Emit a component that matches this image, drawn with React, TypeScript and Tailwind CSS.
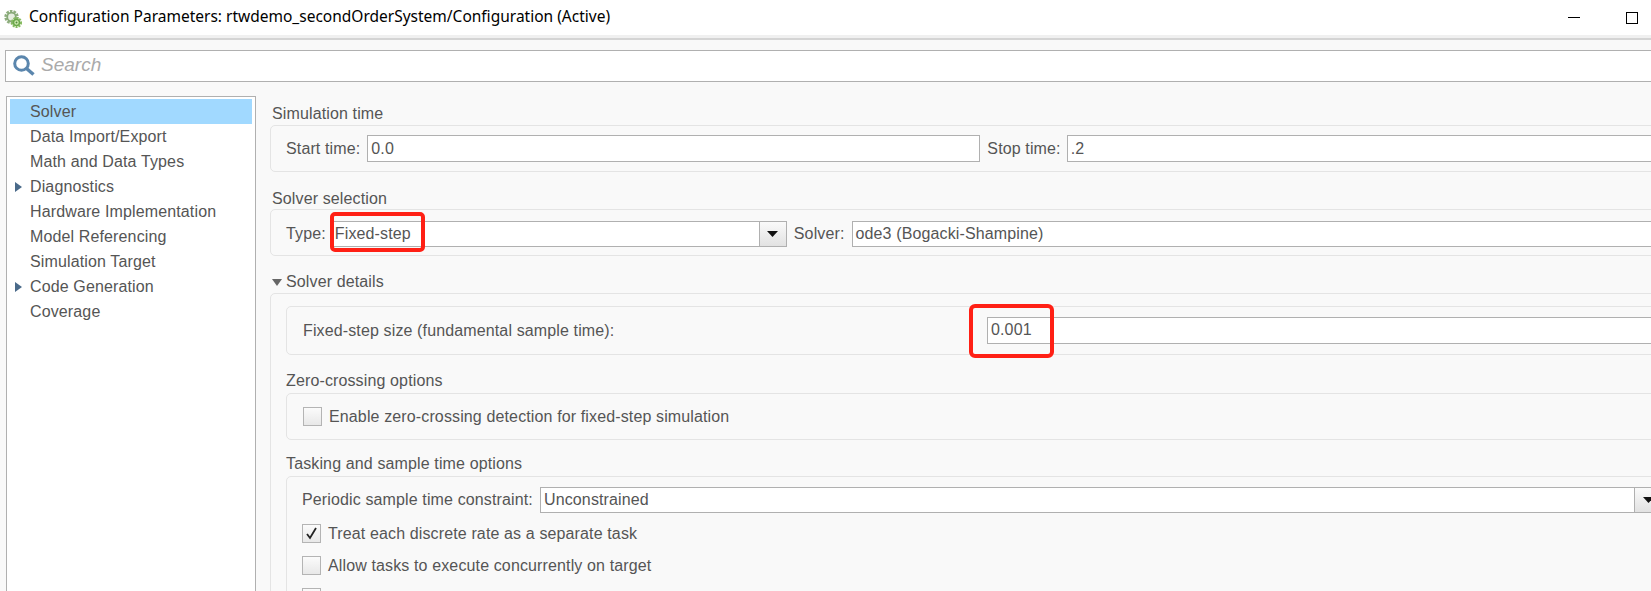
const arial = "font-['Liberation_Sans',Arial,sans-serif]";

function Select({ text, className }: { text: string; className: string }) {
  return (
    <div className={`flex h-[26px] border border-[#b0b0b0] bg-white ${className}`}>
      <span className="flex-1 pl-[3px] leading-[23px]">{text}</span>
      <span className="flex w-[27px] shrink-0 items-center justify-center border-l border-[#b0b0b0] bg-gradient-to-b from-[#fafafa] to-[#e2e2e2]">
        <svg width="11" height="6" viewBox="0 0 11 6"><path d="M0 0h11L5.500 6z" fill="#111" /></svg>
      </span>
    </div>
  );
}

function Check({ label, checked, className }: { label: string; checked?: boolean; className: string }) {
  return (
    <div className={`flex items-center leading-[19px] ${className}`}>
      <span className="mr-[7px] flex h-[19px] w-[19px] items-center justify-center border border-[#b4b4b4] bg-gradient-to-b from-[#fbfbfb] to-[#e8e8e8]">
        {checked && (
          <svg width="13" height="13" viewBox="0 0 13 13"><path d="M2 7l3 4 6-10" fill="none" stroke="#222" strokeWidth="1.800" /></svg>
        )}
      </span>
      <span>{label}</span>
    </div>
  );
}

const Panel = "w-[1500px] rounded-[5px] border border-[#e4e4e4]";

export default function App() {
  const nav: [string, boolean][] = [
    ["Solver", false],
    ["Data Import/Export", false],
    ["Math and Data Types", false],
    ["Diagnostics", true],
    ["Hardware Implementation", false],
    ["Model Referencing", false],
    ["Simulation Target", false],
    ["Code Generation", true],
    ["Coverage", false],
  ];
  return (
    <div className={`flex h-[591px] w-[1651px] flex-col overflow-hidden bg-[#f9f9f9] text-[16px] tracking-[0.13px] text-[#555555] ${arial}`}>
      <div className="flex h-[35px] shrink-0 items-center bg-white tracking-normal text-black">
        <svg className="ml-[4px] mr-[7px] mt-[2px]" width="18" height="18" viewBox="0 0 18 18">
          <circle cx="7.500" cy="7" r="6" fill="none" stroke="#8fae7e" strokeWidth="2.400" strokeDasharray="2.600 1.100" />
          <circle cx="7.500" cy="7" r="4.300" fill="#e6eee0" stroke="#86a876" strokeWidth="1.800" />
          <circle cx="12.500" cy="12.500" r="4.600" fill="none" stroke="#86bb5f" strokeWidth="2" strokeDasharray="2 1" />
          <circle cx="12.500" cy="12.500" r="3" fill="#d4ecb6" stroke="#6aa84a" strokeWidth="1.600" />
          <circle cx="12.500" cy="12.500" r="1" fill="#4f8a38" />
        </svg>
        <span className="-mt-[2px] font-['Noto_Sans',sans-serif] text-[15.500px]">
          Configuration Parameters: rtwdemo_secondOrderSystem/Configuration (Active)
        </span>
        <span className="ml-auto flex items-center">
          <span className="h-px w-[12px] bg-black" />
          <span className="ml-[46px] mr-[13px] h-[12px] w-[12px] border border-black" />
        </span>
      </div>
      <div className="h-[3px] shrink-0 bg-[#f0f0f0]" />
      <div className="h-[2px] shrink-0 bg-[#d4d4d4]" />

      <div className="ml-[5px] mt-[10px] flex h-[32px] w-[1700px] shrink-0 items-center border border-[#b0b0b0] bg-white">
        <svg className="ml-[6px]" width="24" height="24" viewBox="0 0 24 24">
          <circle cx="9.500" cy="9.500" r="6.800" fill="none" stroke="#5b86ad" strokeWidth="3" />
          <path d="M14.500 14.500l7 6" stroke="#5b86ad" strokeWidth="3.500" />
        </svg>
        <span className="-mt-[2px] ml-[5px] text-[19px] italic tracking-normal text-[#aaaaaa]">Search</span>
      </div>

      <div className="flex min-h-0 flex-1">
        <div className="ml-[6px] mt-[14px] h-[600px] w-[250px] shrink-0 border border-[#b0b0b0] bg-white p-[2px] pl-[3px]">
          {nav.map(([name, arrow], i) => (
            <div key={name} className={`flex h-[25px] w-[242px] items-center ${i === 0 ? "bg-[#a1d9ff]" : ""}`}>
              <span className="flex w-[20px] pl-[5px]">
                {arrow && <svg width="7" height="10" viewBox="0 0 7 10"><path d="M0 0l7 5-7 5z" fill="#4a6a8a" /></svg>}
              </span>
              <span>{name}</span>
            </div>
          ))}
        </div>

        <div className="ml-[14px] min-w-0 flex-1">
          <div className="ml-[2px] mt-[23px] h-[18px] leading-[18px]">Simulation time</div>
          <div className={`mt-[2px] flex h-[47px] items-center pl-[15px] ${Panel}`}>
            <span>Start time:</span>
            <span className="ml-[7px] h-[27px] w-[613px] border border-[#b0b0b0] bg-white pl-[3px] leading-[26px]">0.0</span>
            <span className="ml-[7px]">Stop time:</span>
            <span className="ml-[6px] h-[27px] flex-1 border border-[#b0b0b0] bg-white pl-[3px] leading-[26px]">.2</span>
          </div>

          <div className="ml-[2px] mt-[18px] h-[18px] leading-[18px]">Solver selection</div>
          <div className={`mt-px flex h-[47px] items-center pl-[15px] pt-[2px] ${Panel}`}>
            <span>Type:</span>
            <Select text="Fixed-step" className="ml-[5px] w-[456px]" />
            <span className="ml-[7px]">Solver:</span>
            <span className="ml-[7px] h-[26px] flex-1 border border-[#b0b0b0] bg-white pl-[3px] leading-[23px]">ode3 (Bogacki-Shampine)</span>
          </div>

          <div className="ml-[2px] mt-[17px] flex h-[18px] items-center">
            <svg width="10" height="7" viewBox="0 0 10 7"><path d="M0 0h10L5 7z" fill="#666666" /></svg>
            <span className="ml-[4px]">Solver details</span>
          </div>
          <div className={`mt-[2px] h-[400px] pl-[15px] pt-[12px] ${Panel}`}>
            <div className={`flex h-[49px] items-center pl-[16px] ${Panel}`}>
              <span className="w-[684px]">Fixed-step size (fundamental sample time):</span>
              <span className="h-[27px] flex-1 border border-[#b0b0b0] bg-white pl-[3px] leading-[24px]">0.001</span>
            </div>
            <div className="mt-[17px] h-[18px] leading-[18px]">Zero-crossing options</div>
            <div className={`mt-[3px] flex h-[47px] items-center pl-[16px] ${Panel}`}>
              <Check label="Enable zero-crossing detection for fixed-step simulation" className="" />
            </div>
            <div className="mt-[15px] h-[18px] leading-[18px]">Tasking and sample time options</div>
            <div className={`mt-[3px] h-[200px] pl-[15px] pt-[10px] ${Panel}`}>
              <div className="flex items-center">
                <span className="w-[238px]">Periodic sample time constraint:</span>
                <Select text="Unconstrained" className="w-[1122px]" />
              </div>
              <Check label="Treat each discrete rate as a separate task" checked className="mt-[11px]" />
              <Check label="Allow tasks to execute concurrently on target" className="mt-[13px]" />
              <Check label="" className="mt-[13px]" />
            </div>
          </div>
        </div>
      </div>

      <div className="absolute left-[330px] top-[212px] h-[40px] w-[95px] rounded-[5px] border-4 border-[#ff2015]" />
      <div className="absolute left-[969px] top-[304px] h-[54px] w-[85px] rounded-[6px] border-4 border-[#ff2015]" />
    </div>
  );
}
